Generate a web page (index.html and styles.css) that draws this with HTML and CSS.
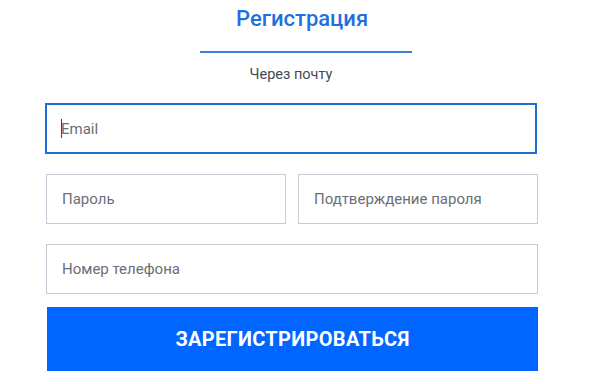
FILE: index.html
```html
<!DOCTYPE html>
<html lang="ru">
<head>
<meta charset="utf-8">
<title>Регистрация</title>
<link rel="stylesheet" href="styles.css">
</head>
<body>
<div class="page">
  <div class="header">
    <h1 class="title">Регистрация</h1>
    <div class="tab-line"></div>
    <div class="subtitle">Через почту</div>
  </div>
  <form class="form">
    <div class="field field-focus">
      <input class="input input-focus" type="email" placeholder="Email">
      <span class="caret"></span>
    </div>
    <div class="row">
      <input class="input" type="password" placeholder="Пароль">
      <input class="input" type="password" placeholder="Подтверждение пароля">
    </div>
    <input class="input" type="tel" placeholder="Номер телефона">
    <button class="submit" type="button">Зарегистрироваться</button>
  </form>
</div>
</body>
</html>
```

FILE: styles.css
```css
html, body {
  margin: 0;
  padding: 0;
  background: #ffffff;
  font-family: Roboto, "Liberation Sans", sans-serif;
}

.page {
  width: 600px;
  height: 384px;
  overflow: hidden;
  padding-top: 5px;
  box-sizing: border-box;
}

.header {
  display: flex;
  flex-direction: column;
  align-items: flex-start;
}

.title {
  margin: 0 0 0 236px;
  font-size: 22px;
  line-height: 27px;
  font-weight: 500;
  color: #1f6fe0;
}

.tab-line {
  width: 212px;
  height: 2px;
  margin-left: 200px;
  background: #3b7fd4;
  margin-top: 19px;
}

.subtitle {
  width: 490px;
  margin: 13px 0 0 46px;
  text-align: center;
  font-size: 14.5px;
  line-height: 17px;
  color: #444a52;
}

.form {
  width: 492px;
  margin: 20px 0 0 46px;
  display: flex;
  flex-direction: column;
  gap: 20px;
}

.field {
  position: relative;
  display: flex;
}

.input {
  width: 100%;
  height: 50px;
  box-sizing: border-box;
  border: 1px solid #c8cbd5;
  border-radius: 0;
  padding: 0 15px;
  font-family: Roboto, "Liberation Sans", sans-serif;
  font-size: 15px;
  color: #333;
  background: #fff;
  outline: none;
}

.input::placeholder {
  color: #6b6e75;
}

.input-focus {
  border: 2px solid #1a6fd9;
  padding: 0 14px;
  height: 51px;
  margin-left: -1px;
}

.caret {
  position: absolute;
  left: 15px;
  top: 16px;
  width: 1px;
  height: 19px;
  background: #444;
}

.row {
  display: flex;
  gap: 12px;
}

.row .input {
  flex: 1;
  width: auto;
  min-width: 0;
}

.submit {
  margin-top: -7px;
  margin-left: 1px;
  width: 491px;
  height: 64px;
  border: none;
  border-radius: 0;
  background: #0066ff;
  color: #ffffff;
  font-family: Roboto, "Liberation Sans", sans-serif;
  font-size: 20px;
  font-weight: 700;
  text-transform: uppercase;
  letter-spacing: 0.3px;
  cursor: pointer;
}
```
